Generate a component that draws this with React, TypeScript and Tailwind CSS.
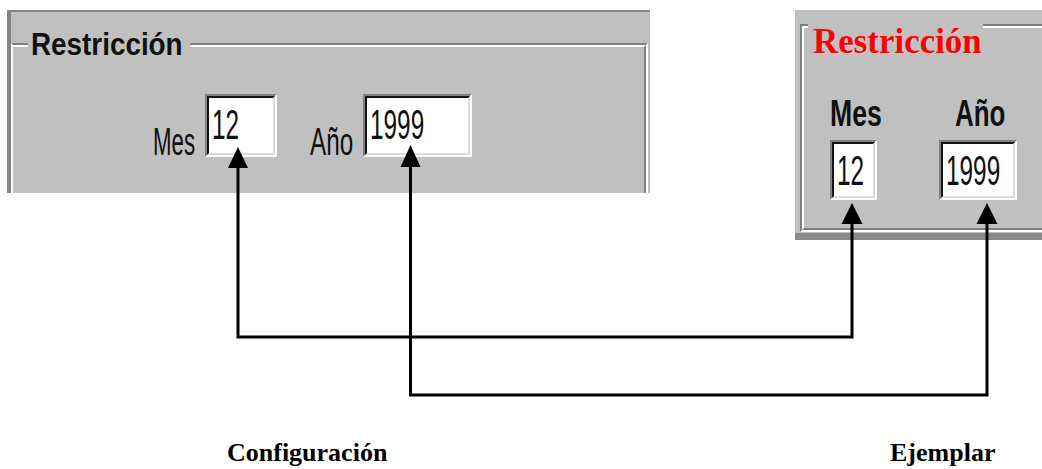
import React from "react"

const sans = "font-['Liberation_Sans',Arial,sans-serif]"
const serif = "font-['Liberation_Serif','Times_New_Roman',serif]"

// sunken win95 edit box
function EditBox({ value, w, h }: { value: string; w: string; h: string }) {
    return (
        <div className={`${w} ${h} border-2 border-t-[#808080] border-l-[#808080] border-r-white border-b-white`}>
            <div className="h-full border-2 border-t-[#141414] border-l-[#141414] border-r-[#dcdcdc] border-b-[#dcdcdc] bg-white pt-[6px] pl-[3px]">
                <div className={`${sans} text-[42px] leading-none text-[#111] whitespace-nowrap origin-left scale-x-[0.58]`}>{value}</div>
            </div>
        </div>
    )
}

function ConfigPanel() {
    return (
        <div className="ml-[7px] w-[643px] h-[183px] bg-[#c0c0c0] border-l-4 border-t-2 border-[#858585]">
            <div className="relative mt-[31px] w-[637px] h-[150px] border-t-2 border-l-2 border-r-2 border-t-[#808080] border-l-white border-r-white">
                <div className="h-full border-t-2 border-r-2 border-t-white border-r-[#808080]">
                    <div className="flex items-start mt-[47px] ml-[140px]">
                        <div className={`${sans} w-[42px] mt-[29px] text-[38px] leading-none text-[#111] whitespace-nowrap origin-left scale-x-[0.585]`}>Mes</div>
                        <div className="ml-[10px]">
                            <EditBox value="12" w="w-[72px]" h="h-[63px]" />
                        </div>
                        <div className={`${sans} ml-[33px] w-[43px] mt-[29px] text-[38px] leading-none text-[#111] whitespace-nowrap origin-left scale-x-[0.64]`}>Año</div>
                        <div className="ml-[10px]">
                            <EditBox value="1999" w="w-[109px]" h="h-[63px]" />
                        </div>
                    </div>
                </div>
                <div className="absolute left-[15px] top-[-17px] w-[162px] h-[34px] bg-[#c0c0c0] pl-[3px]">
                    <span className={`${sans} block text-[32px] font-bold leading-none text-[#111] whitespace-nowrap origin-left scale-x-[0.87]`}>Restricción</span>
                </div>
            </div>
        </div>
    )
}

function SamplePanel() {
    return (
        <div className="ml-[145px] w-[247px] h-[230px] bg-[#c0c0c0] border-b-[7px] border-[#8a8a8a] overflow-hidden">
            <div className="relative mt-[14px] ml-[5px] w-[260px] h-[208px] border-2 border-r-0 border-t-[#808080] border-l-[#808080] border-b-white">
                <div className="h-full border-2 border-r-0 border-t-white border-l-white border-b-[#808080]">
                    <div className="flex items-start mt-[67px] ml-[26px]">
                        <div className="flex flex-col w-[52px]">
                            <div className={`${sans} w-[52px] text-[37px] font-bold leading-none text-[#111] whitespace-nowrap origin-left scale-x-[0.72]`}>Mes</div>
                            <div className="mt-[8px]">
                                <EditBox value="12" w="w-[47px]" h="h-[60px]" />
                            </div>
                        </div>
                        <div className="flex flex-col ml-[57px]">
                            <div className={`${sans} ml-[16px] w-[50px] text-[37px] font-bold leading-none text-[#111] whitespace-nowrap origin-left scale-x-[0.7]`}>Año</div>
                            <div className="mt-[8px]">
                                <EditBox value="1999" w="w-[78px]" h="h-[60px]" />
                            </div>
                        </div>
                    </div>
                </div>
                <div className="absolute left-[6px] top-[-3px] w-[175px] h-[36px] bg-[#c0c0c0] pl-[5px]">
                    <span className={`${serif} block text-[36px] font-bold leading-none text-[#ff0000] whitespace-nowrap origin-left scale-x-[0.97] [text-shadow:1px_1px_0_#f2d0d0]`}>Restricción</span>
                </div>
            </div>
        </div>
    )
}

export default function App() {
    return (
        <div className="relative w-[1042px] h-[469px] bg-white overflow-hidden">
            <div className="flex items-start pt-[10px]">
                <ConfigPanel />
                <SamplePanel />
            </div>

            <div className={`${serif} flex mt-[200px] text-[26px] font-bold leading-none text-black`}>
                <span className="ml-[227px] w-[160px] whitespace-nowrap">Configuración</span>
                <span className="ml-[503px] whitespace-nowrap">Ejemplar</span>
            </div>

            {/* flechas que unen los campos */}
            <svg className="absolute inset-0 pointer-events-none" width="1042" height="469" viewBox="0 0 1042 469">
                <g fill="none" stroke="#000" strokeWidth="3" strokeLinejoin="miter">
                    <path d="M238 166 V337 H852 V222" />
                    <path d="M410.5 166 V395 H987 V222" />
                </g>
                <g fill="#000">
                    <polygon points="238,147 228,168 248,168" />
                    <polygon points="410.5,145 400.5,167 420.5,167" />
                    <polygon points="852,203 841.5,224 862.5,224" />
                    <polygon points="987,203 976.5,224 997.5,224" />
                </g>
            </svg>
        </div>
    )
}
